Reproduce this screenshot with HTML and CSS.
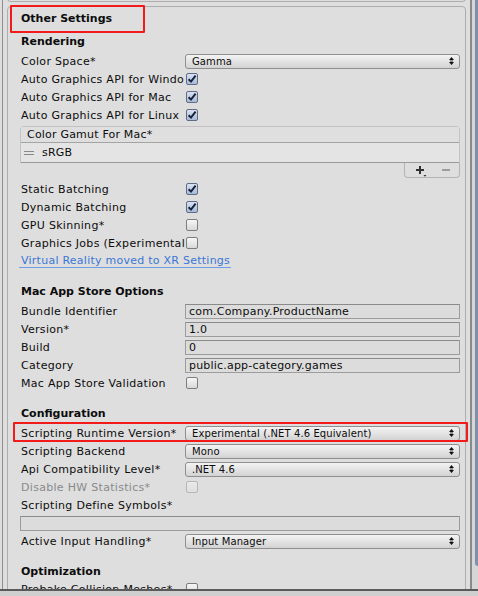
FILE: index.html
```html
<!DOCTYPE html>
<html>
<head>
<meta charset="utf-8">
<link rel="stylesheet" href="styles.css">
</head>
<body>
<div class="window">
  <div class="top">
    <div class="main">
      <div class="prev-box"></div>
      <div class="box">
        <div class="box-title">Other Settings</div>

        <div class="section first">Rendering</div>
        <div class="row"><span class="label">Color Space*</span><div class="popup"><span class="popup-text">Gamma</span><svg class="arrows" width="5" height="8" viewBox="0 0 5 8"><path d="M0 3 L2.5 0 L5 3Z M0 5 L5 5 L2.5 8Z" fill="#111"/><rect x="1" y="3.6" width="3" height="0.8" fill="#111"/></svg></div></div>
        <div class="row"><span class="label">Auto Graphics API for Windo</span><span class="check on"><svg width="12" height="12" viewBox="0 0 12 12"><path d="M2.6 6.2 L5 8.6 L9.6 2.6" fill="none" stroke="#18223a" stroke-width="2"/></svg></span></div>
        <div class="row"><span class="label">Auto Graphics API for Mac</span><span class="check on"><svg width="12" height="12" viewBox="0 0 12 12"><path d="M2.6 6.2 L5 8.6 L9.6 2.6" fill="none" stroke="#18223a" stroke-width="2"/></svg></span></div>
        <div class="row"><span class="label">Auto Graphics API for Linux</span><span class="check on"><svg width="12" height="12" viewBox="0 0 12 12"><path d="M2.6 6.2 L5 8.6 L9.6 2.6" fill="none" stroke="#18223a" stroke-width="2"/></svg></span></div>

        <div class="list">
          <div class="list-header">Color Gamut For Mac*</div>
          <div class="list-item"><span class="handle"></span><span class="item-text">sRGB</span></div>
        </div>
        <div class="list-footer-wrap">
          <div class="list-footer">
            <svg class="plus" width="12" height="11" viewBox="0 0 12 11"><rect x="0" y="3" width="8" height="2" fill="#333"/><rect x="3" y="0" width="2" height="8" fill="#333"/><path d="M7.5 9 L10.5 9 L9 10.8Z" fill="#333"/></svg>
            <span class="minus"></span>
          </div>
        </div>

        <div class="row"><span class="label">Static Batching</span><span class="check on"><svg width="12" height="12" viewBox="0 0 12 12"><path d="M2.6 6.2 L5 8.6 L9.6 2.6" fill="none" stroke="#18223a" stroke-width="2"/></svg></span></div>
        <div class="row"><span class="label">Dynamic Batching</span><span class="check on"><svg width="12" height="12" viewBox="0 0 12 12"><path d="M2.6 6.2 L5 8.6 L9.6 2.6" fill="none" stroke="#18223a" stroke-width="2"/></svg></span></div>
        <div class="row"><span class="label">GPU Skinning*</span><span class="check"></span></div>
        <div class="row"><span class="label">Graphics Jobs (Experimental</span><span class="check"></span></div>
        <div class="row"><span class="link">Virtual Reality moved to XR Settings</span></div>

        <div class="section">Mac App Store Options</div>
        <div class="row"><span class="label">Bundle Identifier</span><div class="field">com.Company.ProductName</div></div>
        <div class="row"><span class="label">Version*</span><div class="field">1.0</div></div>
        <div class="row"><span class="label">Build</span><div class="field">0</div></div>
        <div class="row"><span class="label">Category</span><div class="field">public.app-category.games</div></div>
        <div class="row"><span class="label">Mac App Store Validation</span><span class="check"></span></div>

        <div class="section">Configuration</div>
        <div class="row"><span class="label">Scripting Runtime Version*</span><div class="popup"><span class="popup-text">Experimental (.NET 4.6 Equivalent)</span><svg class="arrows" width="5" height="8" viewBox="0 0 5 8"><path d="M0 3 L2.5 0 L5 3Z M0 5 L5 5 L2.5 8Z" fill="#111"/><rect x="1" y="3.6" width="3" height="0.8" fill="#111"/></svg></div></div>
        <div class="row"><span class="label">Scripting Backend</span><div class="popup"><span class="popup-text">Mono</span><svg class="arrows" width="5" height="8" viewBox="0 0 5 8"><path d="M0 3 L2.5 0 L5 3Z M0 5 L5 5 L2.5 8Z" fill="#111"/><rect x="1" y="3.6" width="3" height="0.8" fill="#111"/></svg></div></div>
        <div class="row"><span class="label">Api Compatibility Level*</span><div class="popup"><span class="popup-text">.NET 4.6</span><svg class="arrows" width="5" height="8" viewBox="0 0 5 8"><path d="M0 3 L2.5 0 L5 3Z M0 5 L5 5 L2.5 8Z" fill="#111"/><rect x="1" y="3.6" width="3" height="0.8" fill="#111"/></svg></div></div>
        <div class="row"><span class="label disabled">Disable HW Statistics*</span><span class="check off"></span></div>
        <div class="row"><span class="label wide">Scripting Define Symbols*</span></div>
        <div class="row"><div class="field full"></div></div>
        <div class="row"><span class="label">Active Input Handling*</span><div class="popup"><span class="popup-text">Input Manager</span><svg class="arrows" width="5" height="8" viewBox="0 0 5 8"><path d="M0 3 L2.5 0 L5 3Z M0 5 L5 5 L2.5 8Z" fill="#111"/><rect x="1" y="3.6" width="3" height="0.8" fill="#111"/></svg></div></div>

        <div class="section last">Optimization</div>
        <div class="row"><span class="label">Prebake Collision Meshes*</span><span class="check"></span></div>
      </div>
    </div>
    <div class="scrollbar"><div class="thumb"></div></div>
  </div>
  <div class="bottom-bar"></div>

  <div class="highlight h1"></div>
  <div class="highlight h2"></div>
</div>
</body>
</html>
```

FILE: styles.css
```css
* { box-sizing: border-box; }
html, body { margin: 0; padding: 0; }
body {
  background: #dedede;
  font-family: "DejaVu Sans", Verdana, sans-serif;
  font-size: 11px;
  color: #0c0c0c;
}
.window {
  position: relative;
  width: 478px;
  height: 596px;
  overflow: hidden;
  display: flex;
  flex-direction: column;
  background: #dedede;
}
.top {
  display: flex;
  height: 589px;
  flex: none;
  overflow: hidden;
}
.main {
  width: 468px;
  flex: none;
  margin-left: 2px;
  border-left: 1px solid #8e8e8e;
}
.prev-box {
  margin: -2px 0 0 4px;
  width: 459px;
  height: 4px;
  border: 1px solid #adadad;
  border-top: 0;
  border-radius: 0 0 4px 4px;
}
.box {
  margin: 4px 0 0 4px;
  width: 459px;
  height: 700px;
  border: 1px solid #adadad;
  border-radius: 4px;
  padding: 2px 5px 0 13px;
}
.box-title {
  height: 18px;
  line-height: 20px;
  font-weight: bold;
}
.section {
  height: 18px;
  line-height: 20px;
  font-weight: bold;
  margin-top: 12px;
  margin-bottom: 2px;
}
.section.first { margin-top: 5px; }
.section.last { margin-bottom: 0; }
.row {
  display: flex;
  align-items: center;
  height: 18px;
}
.label {
  width: 164px;
  flex: none;
  overflow: hidden;
  white-space: nowrap;
  letter-spacing: 0.3px;
}
.label.wide { width: auto; }
.label.disabled { color: #8a8a8a; }

.popup {
  width: 275px;
  height: 15px;
  border: 1px solid #8f8f8f;
  border-radius: 3px;
  background: linear-gradient(#f3f3f3, #e2e2e2 55%, #d2d2d2);
  display: flex;
  align-items: center;
  padding: 0 5px 0 6px;
  font-size: 10px;
  letter-spacing: 0.1px;
}
.popup-text { flex: 1; white-space: nowrap; overflow: hidden; }
.arrows { flex: none; }

.field {
  width: 275px;
  height: 15px;
  border: 1px solid #9c9c9c;
  border-top-color: #8a8a8a;
  background: #dcdcdc;
  padding: 0 3px;
  line-height: 13px;
  letter-spacing: 0.2px;
  white-space: nowrap;
}
.field.full {
  width: 440px;
  margin-left: -1px;
  margin-top: 2px;
  align-self: flex-start;
}

.check {
  width: 12px;
  height: 12px;
  margin-left: 1px;
  border: 1px solid #7e7e7e;
  border-radius: 2px;
  background: linear-gradient(#f6f6f6, #d9d9d9);
  display: flex;
}
.check svg { margin: -1px; }
.check.on {
  border-color: #5f6c86;
  background: linear-gradient(#d9e2f2, #a9bad8);
}
.check.off {
  border-color: #b6b6b6;
  background: linear-gradient(#e9e9e9, #dedede);
}

.link {
  display: inline-block;
  color: #3b76d6;
  line-height: 13px;
  letter-spacing: 0.25px;
  border-bottom: 1px solid #6f9de6;
  padding: 0 1px 0 2px;
  margin-left: -2px;
}

.list {
  margin: 2px 0 0 -1px;
  width: 440px;
  border: 1px solid #c2c2c2;
  border-bottom: 0;
  border-radius: 4px 4px 0 0;
}
.list-header {
  height: 16px;
  line-height: 16px;
  padding-left: 6px;
  letter-spacing: 0.2px;
  border-bottom: 1px solid #a4a4a4;
  background: #dfdfdf;
}
.list-item {
  height: 20px;
  display: flex;
  align-items: center;
  background: #e4e4e4;
  border-bottom: 1px solid #9a9a9a;
}
.handle {
  width: 10px;
  height: 4px;
  margin: 1px 0 0 3px;
  border-top: 1px solid #8a8a8a;
  border-bottom: 1px solid #8a8a8a;
}
.item-text {
  margin-left: 8px;
  letter-spacing: 0.2px;
}
.list-footer-wrap {
  display: flex;
  justify-content: flex-end;
  width: 439px;
  margin-bottom: 2px;
}
.list-footer {
  width: 56px;
  height: 15px;
  border: 1px solid #b4b4b4;
  border-top: 0;
  border-radius: 0 0 4px 4px;
  display: flex;
  align-items: center;
  padding: 0 0 0 11px;
  background: #dedede;
}
.plus { margin-top: 2px; }
.minus {
  width: 8px;
  height: 2px;
  background: #9c9c9c;
  margin-left: 14px;
}

.scrollbar {
  width: 10px;
  flex: none;
  border-left: 2px solid #8a8a8a;
  background: #d6d6d6;
  display: flex;
}
.thumb {
  width: 8px;
  height: 566px;
  margin-left: 3px;
  flex: none;
  background: #8190aa;
  border-radius: 0 0 3px 3px;
}

.bottom-bar {
  flex: 1;
  border-top: 2px solid #5a5a5a;
  background: #cfcfcf;
}

.highlight {
  position: absolute;
  border: 2px solid #f21b1b;
  border-radius: 1px;
}
.h1 { left: 10px; top: 5px; width: 135px; height: 28px; }
.h2 { left: 13px; top: 422px; width: 455px; height: 20px; }
```
